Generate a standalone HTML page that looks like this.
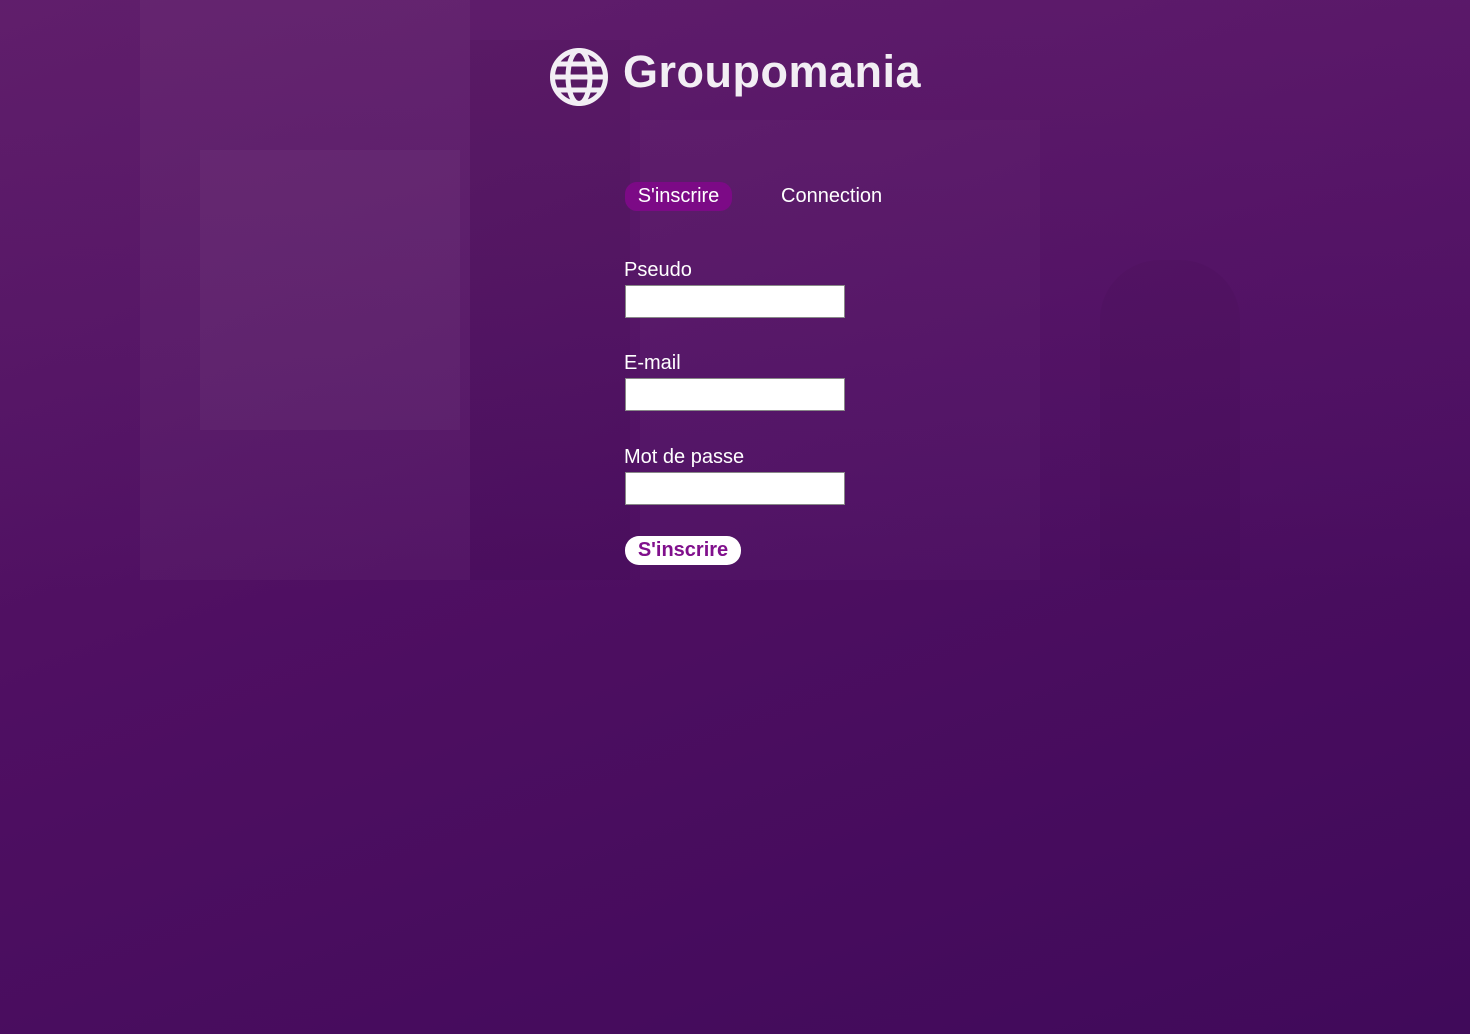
<!DOCTYPE html>
<html><head><meta charset="utf-8"><style>
html,body{margin:0;width:1470px;height:1034px;overflow:hidden;font-family:"Liberation Sans",sans-serif}
body{background:linear-gradient(160deg,#5a1a66 0%,#4f0f62 45%,#400a5a 100%);position:relative}
.bg{position:absolute;left:0;top:0;width:1470px;height:590px;background:linear-gradient(180deg,rgba(110,40,120,.3),rgba(90,30,110,.15) 80%,rgba(80,20,100,0));}
.b{position:absolute;background:rgba(255,255,255,.03)}
.logo{position:absolute;left:549px;top:47px}
.title{position:absolute;left:623px;top:46px;font-size:45px;font-weight:bold;color:#f2eef4;letter-spacing:.5px}
.tab{position:absolute;top:182px;height:29px;line-height:29px;font-size:20px;color:#fff}
.t1{left:625px;width:107px;text-align:center;background:#7c0a86;border-radius:12px}
.t2{left:781px}
label{position:absolute;left:624px;font-size:20px;color:#fff}
.in{position:absolute;left:625px;height:33px;background:#fff;border:1px solid #888;box-sizing:border-box;width:220px}
.btn{position:absolute;left:625px;top:536px;width:116px;height:29px;background:#fff;border-radius:14px;color:#80108c;font-weight:bold;font-size:20px;text-align:center;line-height:29px}
</style></head><body>
<div class="bg"></div>
<div class="b" style="left:140px;top:0;width:330px;height:580px"></div>
<div class="b" style="left:200px;top:150px;width:260px;height:280px"></div>
<div class="b" style="left:470px;top:40px;width:160px;height:540px;background:rgba(0,0,0,.04)"></div>
<div class="b" style="left:640px;top:120px;width:400px;height:460px;background:rgba(255,255,255,.02)"></div>
<div class="b" style="left:1100px;top:260px;width:140px;height:320px;background:rgba(0,0,0,.03);border-radius:60px 60px 0 0"></div>
<svg class="logo" width="60" height="60" viewBox="0 0 60 60" fill="none" stroke="#f2eef4" stroke-width="5">
<circle cx="30" cy="30" r="26.5"/>
<ellipse cx="30" cy="30" rx="11" ry="26.5"/>
<path d="M4 30H56M8 17H52M8 43H52"/>
</svg>
<div class="title">Groupomania</div>
<div class="tab t1">S'inscrire</div>
<div class="tab t2">Connection</div>
<label style="top:259px">Pseudo</label>
<div class="in" style="top:285px"></div>
<label style="top:352px">E-mail</label>
<div class="in" style="top:378px"></div>
<label style="top:446px">Mot de passe</label>
<div class="in" style="top:472px"></div>
<div class="btn">S'inscrire</div>
</body></html>
